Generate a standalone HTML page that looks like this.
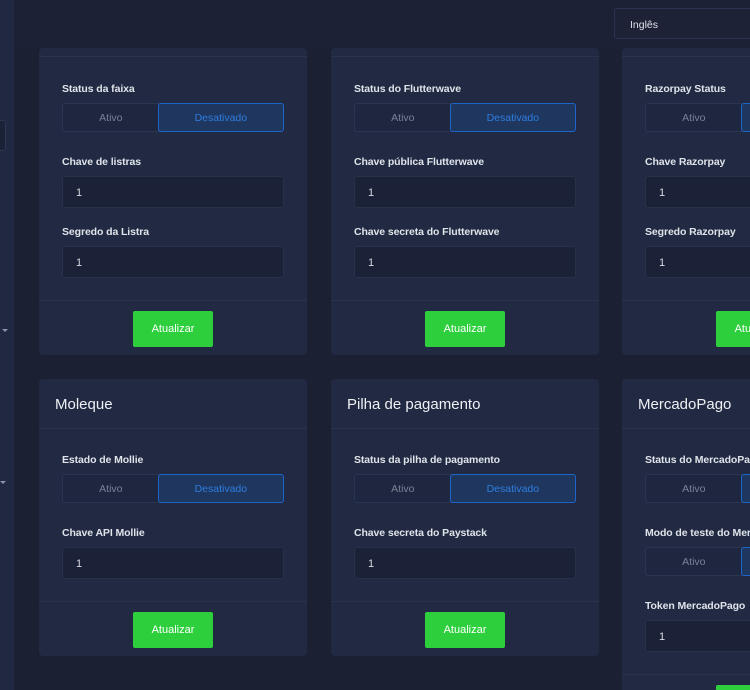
<!DOCTYPE html><html><head><style>
*{margin:0;padding:0;box-sizing:border-box}
html,body{width:750px;height:690px;overflow:hidden}
body{background:#1b2033;font-family:"Liberation Sans",sans-serif;position:relative}
.a{position:absolute}
.side{left:0;top:0;width:14px;height:690px;background:#202842}
.hdr{left:0;top:0;width:750px;height:47px;background:#1c2135}
.card{position:absolute;background:#212a42;border-radius:4px;width:268px;overflow:hidden}
.lbl{position:absolute;left:23px;font-size:10.5px;font-weight:bold;color:#dfe3ea;white-space:nowrap;letter-spacing:-0.1px}
.tg{position:absolute;left:23px;width:222px;height:29px;display:flex;border:1px solid #2b3550;border-radius:3px;background:#1f2740;font-size:10.5px}
.tg div{flex:1;display:flex;align-items:center;justify-content:center;color:#7a8296}
.tg div+div{flex:1.3;background:#1f365f;border:1px solid #1d65c9;border-radius:3px;color:#2f7ee0;margin:-1px}
.inp{position:absolute;left:23px;width:222px;height:32px;background:#1b2136;border:1px solid #283149;border-radius:3px;color:#d8dbe3;font-size:11px;padding:10px 0 0 13px}
.sep{position:absolute;left:0;width:100%;height:1px;background:#2a334c}
.btn{position:absolute;left:94px;width:80px;height:36px;background:#2ecf3c;border-radius:2px;color:#fff;font-size:11px;display:flex;align-items:center;justify-content:center}
.ttl{position:absolute;left:16px;top:17px;font-size:15px;color:#eef0f4}
</style></head><body>
<div class="a hdr"></div>
<div class="a side"></div>
<div class="a" style="left:0;top:120px;width:6px;height:31px;border:1px solid #2d3650;border-left:0;border-radius:0 3px 3px 0;background:#1b2136"></div>
<div class="a" style="left:2px;top:329px;border-left:3px solid transparent;border-right:3px solid transparent;border-top:3px solid #8a92a6"></div>
<div class="a" style="left:0;top:481px;border-left:3px solid transparent;border-right:3px solid transparent;border-top:3px solid #8a92a6"></div>
<div class="a" style="left:614px;top:8px;width:150px;height:31px;border:1px solid #2b3350;border-radius:3px;background:#1d2236;color:#dfe2ea;font-size:10.5px;padding:10px 0 0 15px">Inglês</div>

<div class="card" style="left:39px;top:48px;height:307px"><div class="sep" style="top:8px"></div>
<div class="lbl" style="top:35px">Status da faixa</div><div class="tg" style="top:55px"><div>Ativo</div><div>Desativado</div></div>
<div class="lbl" style="top:108px">Chave de listras</div><div class="inp" style="top:128px">1</div>
<div class="lbl" style="top:178px">Segredo da Listra</div><div class="inp" style="top:198px">1</div>
<div class="sep" style="top:252px"></div><div class="btn" style="top:263px">Atualizar</div></div>

<div class="card" style="left:331px;top:48px;height:307px"><div class="sep" style="top:8px"></div>
<div class="lbl" style="top:35px">Status do Flutterwave</div><div class="tg" style="top:55px"><div>Ativo</div><div>Desativado</div></div>
<div class="lbl" style="top:108px">Chave pública Flutterwave</div><div class="inp" style="top:128px">1</div>
<div class="lbl" style="top:178px">Chave secreta do Flutterwave</div><div class="inp" style="top:198px">1</div>
<div class="sep" style="top:252px"></div><div class="btn" style="top:263px">Atualizar</div></div>

<div class="card" style="left:622px;top:48px;height:307px"><div class="sep" style="top:8px"></div>
<div class="lbl" style="top:35px">Razorpay Status</div><div class="tg" style="top:55px"><div>Ativo</div><div>Desativado</div></div>
<div class="lbl" style="top:108px">Chave Razorpay</div><div class="inp" style="top:128px">1</div>
<div class="lbl" style="top:178px">Segredo Razorpay</div><div class="inp" style="top:198px">1</div>
<div class="sep" style="top:252px"></div><div class="btn" style="top:263px">Atualizar</div></div>

<div class="card" style="left:39px;top:379px;height:277px"><div class="ttl">Moleque</div><div class="sep" style="top:49px"></div>
<div class="lbl" style="top:75px">Estado de Mollie</div><div class="tg" style="top:95px"><div>Ativo</div><div>Desativado</div></div>
<div class="lbl" style="top:148px">Chave API Mollie</div><div class="inp" style="top:168px">1</div>
<div class="sep" style="top:222px"></div><div class="btn" style="top:233px">Atualizar</div></div>

<div class="card" style="left:331px;top:379px;height:277px"><div class="ttl">Pilha de pagamento</div><div class="sep" style="top:49px"></div>
<div class="lbl" style="top:75px">Status da pilha de pagamento</div><div class="tg" style="top:95px"><div>Ativo</div><div>Desativado</div></div>
<div class="lbl" style="top:148px">Chave secreta do Paystack</div><div class="inp" style="top:168px">1</div>
<div class="sep" style="top:222px"></div><div class="btn" style="top:233px">Atualizar</div></div>

<div class="card" style="left:622px;top:379px;width:128px;height:311px;border-radius:4px 0 0 0"><div class="ttl">MercadoPago</div><div class="sep" style="top:49px"></div>
<div class="lbl" style="top:75px">Status do MercadoPago</div><div class="tg" style="top:95px"><div>Ativo</div><div>Desativado</div></div>
<div class="lbl" style="top:148px">Modo de teste do MercadoPago</div><div class="tg" style="top:168px"><div>Ativo</div><div>Desativado</div></div>
<div class="lbl" style="top:221px">Token MercadoPago</div><div class="inp" style="top:241px">1</div>
<div class="sep" style="top:295px"></div><div class="btn" style="top:306px">Atualizar</div></div>
</body></html>
